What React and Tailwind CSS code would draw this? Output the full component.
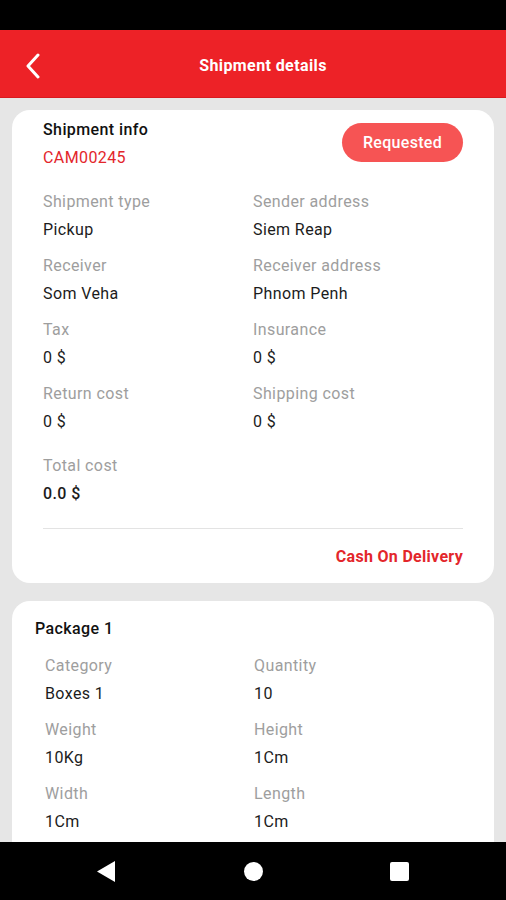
import React from "react";

const Field = ({ label, value, strong }) => (
  <div className="flex flex-col">
    <p className="text-[16px] leading-[20px] tracking-[0.4px] text-[#9e9e9e]">
      {label}
    </p>
    <p
      className={`mt-2 text-[16px] leading-[20px] tracking-[0.4px] text-[#1c1c1c] ${
        strong ? "font-medium" : ""
      }`}
    >
      {value}
    </p>
  </div>
);

const shipmentFields = [
  ["Shipment type", "Pickup"],
  ["Sender address", "Siem Reap"],
  ["Receiver", "Som Veha"],
  ["Receiver address", "Phnom Penh"],
  ["Tax", "0 $"],
  ["Insurance", "0 $"],
  ["Return cost", "0 $"],
  ["Shipping cost", "0 $"],
];

const packageFields = [
  ["Category", "Boxes 1"],
  ["Quantity", "10"],
  ["Weight", "10Kg"],
  ["Height", "1Cm"],
  ["Width", "1Cm"],
  ["Length", "1Cm"],
];

const App = () => {
  return (
    <div
      className="relative w-[506px] h-[900px] overflow-hidden bg-[#e6e6e6] flex flex-col"
      style={{ fontFamily: "Roboto, 'Noto Sans', sans-serif" }}
    >
      {/* status bar */}
      <div className="h-[30px] bg-black shrink-0"></div>

      {/* header */}
      <div className="h-[68px] shrink-0 flex items-center pt-[4px] bg-[#ed2227] border-b border-[#d81b20]">
        <div className="w-[56px] flex items-center pl-[24px]">
          <svg width="18" height="26" viewBox="0 0 18 26" fill="none">
            <polyline
              points="14,2 4,13 14,24"
              stroke="white"
              strokeWidth="3"
              strokeLinecap="round"
              strokeLinejoin="round"
            />
          </svg>
        </div>
        <p className="flex-1 text-center text-white text-[16px] tracking-[0.4px] font-bold">
          Shipment details
        </p>
        <div className="w-[36px]"></div>
      </div>

      {/* content */}
      <div className="flex-1 overflow-hidden px-[12px] pt-[12px]">
        <div className="bg-white rounded-[18px] px-[31px] pt-[10px] pb-[16px]">
          <div className="flex justify-between items-start">
            <div>
              <p className="text-[16px] leading-[20px] tracking-[0.4px] font-medium text-[#111]">
                Shipment info
              </p>
              <p className="mt-2 text-[16px] leading-[20px] tracking-[0.4px] text-[#e3262b]">
                CAM00245
              </p>
            </div>
            <div className="mt-[3px] w-[121px] h-[39px] rounded-full bg-[#f65454] flex items-center justify-center text-white text-[16px] tracking-[0.3px] font-medium">
              Requested
            </div>
          </div>

          <div className="mt-[24px] grid grid-cols-2 gap-y-[16px]">
            {shipmentFields.map(([label, value]) => (
              <Field key={label} label={label} value={value} />
            ))}
          </div>

          <div className="mt-[24px]">
            <Field label="Total cost" value="0.0 $" strong />
          </div>

          <div className="mt-[24px] h-px bg-[#e3e3e3]"></div>

          <p className="mt-[18px] text-right text-[16px] leading-[20px] tracking-[0.3px] font-bold text-[#e3262b]">
            Cash On Delivery
          </p>
        </div>

        <div className="mt-[18px] bg-white rounded-[18px] pt-[18px] pb-[60px]">
          <p className="px-[23px] text-[16px] leading-[20px] tracking-[0.4px] font-medium text-[#111]">
            Package 1
          </p>
          <div className="mt-[17px] pl-[33px] pr-[31px] grid grid-cols-2 gap-y-[16px]">
            {packageFields.map(([label, value]) => (
              <Field key={label} label={label} value={value} />
            ))}
          </div>
        </div>
      </div>

      {/* navigation bar */}
      <div className="absolute bottom-0 left-0 w-full h-[58px] bg-black flex items-center">
        <div className="w-full flex items-center justify-between pl-[97px] pr-[97px]">
          <svg width="19" height="21" viewBox="0 0 19 21">
            <polygon points="18,0 18,21 0,10.5" fill="white" />
          </svg>
          <div className="w-[19px] h-[19px] rounded-full bg-white"></div>
          <div className="w-[19px] h-[19px] rounded-[2px] bg-white"></div>
        </div>
      </div>
    </div>
  );
};

export default App;
